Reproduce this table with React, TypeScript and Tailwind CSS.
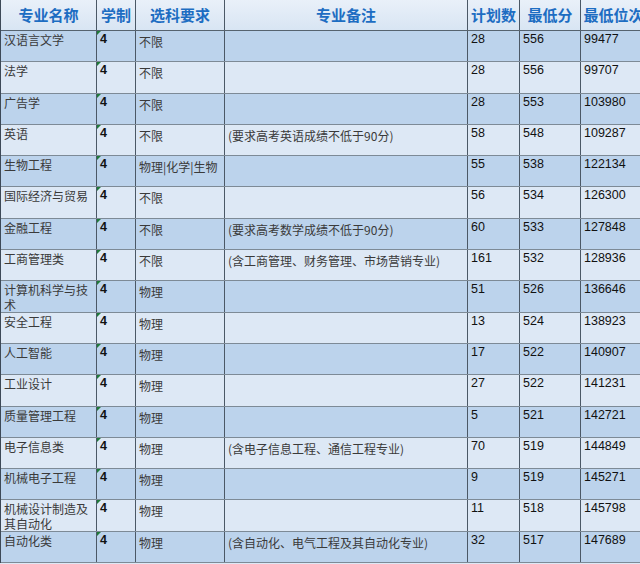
import React from "react";

interface Row {
  name: string;
  years: string;
  subject: string;
  note: string;
  plan: string;
  score: string;
  rank: string;
}

const rows: Row[] = [
  { name: "汉语言文学", years: "4", subject: "不限", note: "", plan: "28", score: "556", rank: "99477" },
  { name: "法学", years: "4", subject: "不限", note: "", plan: "28", score: "556", rank: "99707" },
  { name: "广告学", years: "4", subject: "不限", note: "", plan: "28", score: "553", rank: "103980" },
  { name: "英语", years: "4", subject: "不限", note: "(要求高考英语成绩不低于90分)", plan: "58", score: "548", rank: "109287" },
  { name: "生物工程", years: "4", subject: "物理|化学|生物", note: "", plan: "55", score: "538", rank: "122134" },
  { name: "国际经济与贸易", years: "4", subject: "不限", note: "", plan: "56", score: "534", rank: "126300" },
  { name: "金融工程", years: "4", subject: "不限", note: "(要求高考数学成绩不低于90分)", plan: "60", score: "533", rank: "127848" },
  { name: "工商管理类", years: "4", subject: "不限", note: "(含工商管理、财务管理、市场营销专业)", plan: "161", score: "532", rank: "128936" },
  { name: "计算机科学与技术", years: "4", subject: "物理", note: "", plan: "51", score: "526", rank: "136646" },
  { name: "安全工程", years: "4", subject: "物理", note: "", plan: "13", score: "524", rank: "138923" },
  { name: "人工智能", years: "4", subject: "物理", note: "", plan: "17", score: "522", rank: "140907" },
  { name: "工业设计", years: "4", subject: "物理", note: "", plan: "27", score: "522", rank: "141231" },
  { name: "质量管理工程", years: "4", subject: "物理", note: "", plan: "5", score: "521", rank: "142721" },
  { name: "电子信息类", years: "4", subject: "物理", note: "(含电子信息工程、通信工程专业)", plan: "70", score: "519", rank: "144849" },
  { name: "机械电子工程", years: "4", subject: "物理", note: "", plan: "9", score: "519", rank: "145271" },
  { name: "机械设计制造及其自动化", years: "4", subject: "物理", note: "", plan: "11", score: "518", rank: "145798" },
  { name: "自动化类", years: "4", subject: "物理", note: "(含自动化、电气工程及其自动化专业)", plan: "32", score: "517", rank: "147689" },
];

const cols = "grid grid-cols-[96px_39px_89px_243px_52px_61px_66px]";
const cjk = "font-['Noto_Sans_CJK_SC',sans-serif] text-[12px] text-[#3a3a3a]";
const num = "font-['Liberation_Sans',Arial,sans-serif] text-[12.5px] leading-[15px] text-[#111] pt-[1px] overflow-hidden";
const cell = "border-r-[1.5px] border-[#4b5866] px-[3px]";

const headers = ["专业名称", "学制", "选科要求", "专业备注", "计划数", "最低分", "最低位次"];

export default function App() {
  return (
    <div className="w-[640px] h-[564px] overflow-hidden bg-[#dde8f5]">
      <div className="w-[646px] border-l-[1.5px] border-[#3d4957]">
        <div className={`${cols} h-[31px] bg-gradient-to-b from-[#e9f0f9] to-[#d8e5f3] border-b-[1.5px] border-[#56636f]`}>
          {headers.map((h) => (
            <div
              key={h}
              className="border-r-[1.5px] border-[#4b5866] flex items-center justify-center whitespace-nowrap font-['Noto_Sans_CJK_SC',sans-serif] font-bold text-[15px] text-[#1d6dc2]"
            >
              {h}
            </div>
          ))}
        </div>
        {rows.map((r, i) => (
          <div
            key={r.name}
            className={`${cols} h-[31.3px] border-b-[1.5px] border-[#7d8a96] ${i % 2 === 0 ? "bg-[#bcd3ec]" : "bg-[#dde8f5]"}`}
          >
            <div className={`${cell} ${cjk} pt-[2px] leading-[14.6px] overflow-hidden`}>{r.name}</div>
            <div className={`${cell} relative ${num} font-bold`}>
              <span className="absolute left-0 top-0 w-0 h-0 border-t-[4px] border-r-[4px] border-t-[#1f7a3a] border-r-transparent" />
              {r.years}
            </div>
            <div className={`${cell} ${cjk} pt-[3px] leading-[15px] overflow-hidden`}>{r.subject}</div>
            <div className={`${cell} ${cjk} pt-[3px] leading-[15px] whitespace-nowrap overflow-hidden`}>{r.note}</div>
            <div className={`${cell} ${num}`}>{r.plan}</div>
            <div className={`${cell} ${num}`}>{r.score}</div>
            <div className={`${cell} ${num}`}>{r.rank}</div>
          </div>
        ))}
      </div>
    </div>
  );
}
